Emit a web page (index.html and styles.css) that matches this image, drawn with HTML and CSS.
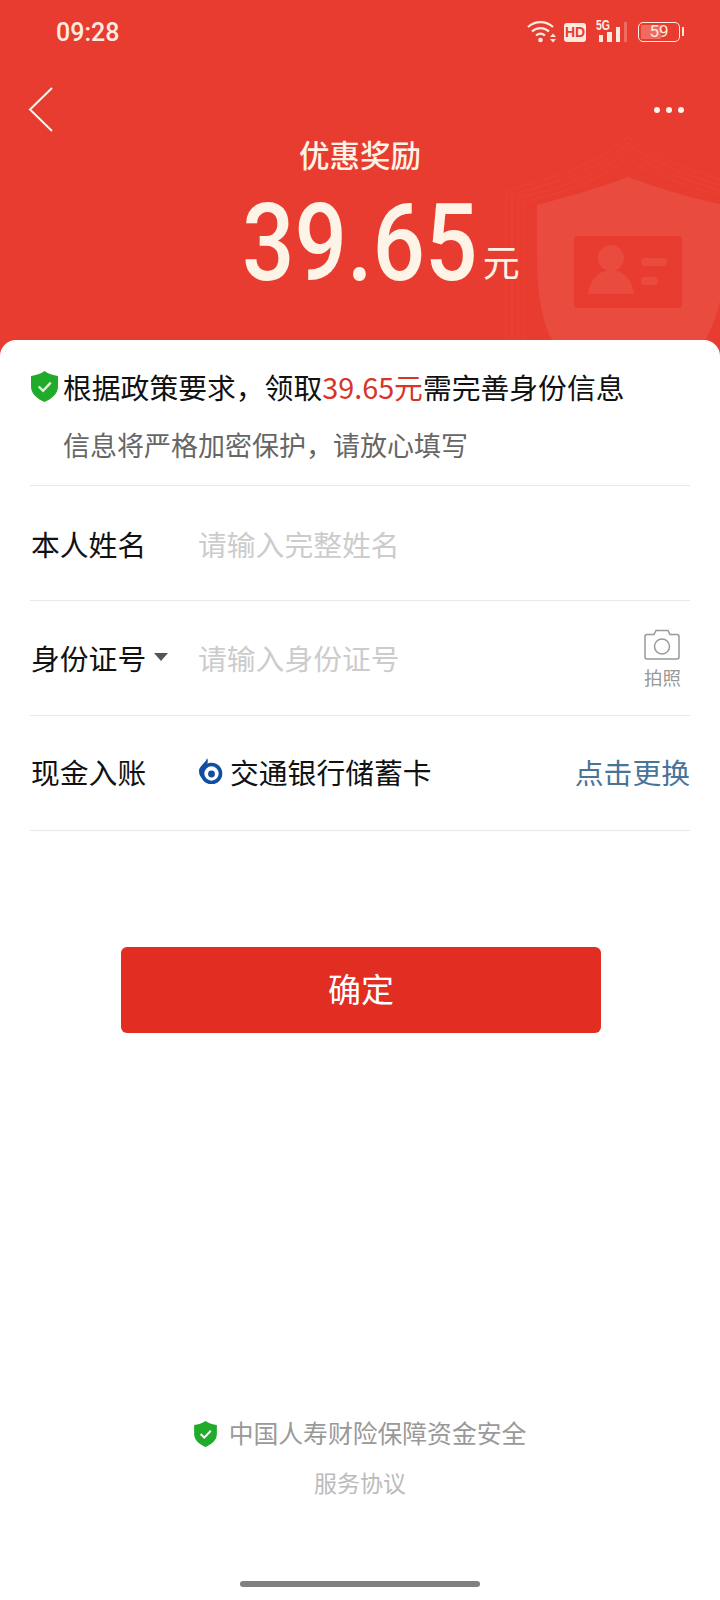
FILE: index.html
```html
<!DOCTYPE html>
<html lang="zh-CN">
<head>
  <meta charset="UTF-8" />
  <meta name="viewport" content="width=device-width, initial-scale=1.0"/>
  <title>优惠奖励</title>
  <link rel="stylesheet" href="styles.css">
</head>
<body>

  <header class="hero">
    <svg class="hero-shield" width="260" height="220" viewBox="0 0 260 220">
      <g fill="none" stroke="#ea4336" stroke-width="1">
        <path d="M6 210V60C60 48 100 30 128 7C156 30 210 48 260 60"/>
        <path d="M12 210V64C66 52 104 35 128 13C152 35 206 52 260 66"/>
        <path d="M18 210V68C72 56 108 40 128 19C148 40 204 56 260 72"/>
        <path d="M24 210V72C76 60 110 45 128 27C146 45 202 60 260 78"/>
      </g>
      <path d="M37 75C72 66 104 56 128 47C152 56 190 68 224 75V130C224 170 214 195 205 210H52C44 195 37 170 37 130Z" fill="#ea4b3f"/>
      <rect x="74" y="106" width="108" height="72" rx="4" fill="#e83c30"/>
      <circle cx="111" cy="128" r="13" fill="#ea4b3f"/>
      <path d="M88 164C90 148 100 140 111 140C122 140 132 148 134 164Z" fill="#ea4b3f"/>
      <rect x="141" y="128" width="26" height="8" rx="4" fill="#ea4b3f"/>
      <rect x="141" y="147" width="17" height="8" rx="4" fill="#ea4b3f"/>
    </svg>

    <div class="status-bar">
      <span class="status-time">09:28</span>
      <div class="status-icons">
        <svg width="30" height="24" viewBox="0 0 30 24">
          <g fill="none" stroke="#fdebe0" stroke-width="2.200">
            <path d="M1 7C8 0.500 19 0.500 26 7"/>
            <path d="M5 11.500C10 7 17 7 22 11.500"/>
            <path d="M9 15.500C12 13 15 13 18 15.500"/>
          </g>
          <circle cx="13.500" cy="20" r="2.300" fill="#fdebe0"/>
          <path d="M23 17L26 13.500L29 17ZM23 19L26 22.500L29 19Z" fill="#fdebe0"/>
        </svg>
        <span class="status-hd">HD</span>
        <div class="signal">
          <span class="signal-label">5G</span>
          <svg width="30" height="24" viewBox="0 0 30 24">
            <rect x="2" y="15" width="4" height="7" fill="#fdebe0"/>
            <rect x="10" y="12" width="5" height="10" fill="#fdebe0"/>
            <rect x="19" y="7" width="4" height="15" fill="#fdebe0"/>
            <rect x="27" y="2" width="3" height="20" fill="#ef6a5f"/>
          </svg>
        </div>
        <div class="battery">
          <span class="battery-level"></span>
          <span class="battery-num">59</span>
        </div>
      </div>
    </div>

    <div class="nav">
      <svg width="26" height="46" viewBox="0 0 26 46">
        <path d="M25 1L3 22.500L25 44" fill="none" stroke="#fdf3ea" stroke-width="2"/>
      </svg>
      <div class="more"><i></i><i></i><i></i></div>
    </div>

    <h1 class="hero-title">优惠奖励</h1>
    <div class="amount-row">
      <span class="amount">39.65</span>
      <span class="amount-unit">元</span>
    </div>
  </header>

  <main class="card">
    <div class="notice">
      <div class="notice-line">
        <svg class="shield" width="27" height="31" viewBox="0 0 28 32">
          <path d="M14 0C18 3 23 4.500 28 5V16C28 24 21 29 14 32C7 29 0 24 0 16V5C5 4.500 10 3 14 0Z" fill="#20ab2a"/>
          <path d="M8 16L12.500 20.500L20.500 12" fill="none" stroke="#dff3dc" stroke-width="2.500"/>
        </svg>
        <span>根据政策要求，领取<em>39.65元</em>需完善身份信息</span>
      </div>
      <p class="notice-sub">信息将严格加密保护，请放心填写</p>
    </div>

    <div class="form-row">
      <span class="form-label">本人姓名</span>
      <span class="placeholder">请输入完整姓名</span>
    </div>

    <div class="form-row form-row-id">
      <span class="form-label">身份证号<i class="caret"></i></span>
      <span class="placeholder">请输入身份证号</span>
      <div class="photo">
        <svg width="36" height="31" viewBox="0 0 36 31">
          <path d="M1 7.500C1 6.500 2 5.500 3 5.500H10L12 1.500H24L26 5.500H33C34 5.500 35 6.500 35 7.500V28C35 29 34 30 33 30H3C2 30 1 29 1 28Z" fill="none" stroke="#999" stroke-width="1.500"/>
          <circle cx="18" cy="17.500" r="7.500" fill="none" stroke="#999" stroke-width="1.500"/>
        </svg>
        <span>拍照</span>
      </div>
    </div>

    <div class="form-row form-row-bank">
      <span class="form-label">现金入账</span>
      <div class="bank">
        <svg width="24" height="26" viewBox="0 0 24 26">
          <path d="M8 0C10 4 8 7 5 10C3 12 3 16 4 21C1 19 0 16 0 13C0 8 7 5 8 0Z" fill="#0f4fa0"/>
          <circle cx="12.500" cy="15.500" r="9" fill="none" stroke="#0f4fa0" stroke-width="3.600"/>
          <circle cx="12.500" cy="16" r="3.400" fill="#0f4fa0"/>
        </svg>
        <span>交通银行储蓄卡</span>
      </div>
      <a class="change-link">点击更换</a>
    </div>

    <button class="confirm">确定</button>

    <footer class="card-foot">
      <div class="assure">
        <svg width="23" height="26" viewBox="0 0 28 32">
          <path d="M14 0C18 3 23 4.500 28 5V16C28 24 21 29 14 32C7 29 0 24 0 16V5C5 4.500 10 3 14 0Z" fill="#20ab2a"/>
          <path d="M8 16L12.500 20.500L20.500 12" fill="none" stroke="#fff" stroke-width="2.500"/>
        </svg>
        <span>中国人寿财险保障资金安全</span>
      </div>
      <a class="agreement">服务协议</a>
      <div class="home-bar"></div>
    </footer>
  </main>

</body>
</html>
```

FILE: styles.css
```css
* {
  box-sizing: border-box;
}

body {
  margin: 0;
  width: 720px;
  background: #e83c30;
  font-family: "Noto Sans CJK SC", "Noto Sans", sans-serif;
  color: #111;
}

.hero {
  position: relative;
  height: 340px;
  overflow: hidden;
  color: #fdf3e6;
}

.hero-shield {
  position: absolute;
  top: 130px;
  left: 500px;
}

.status-bar {
  position: relative;
  display: flex;
  justify-content: space-between;
  align-items: center;
  height: 64px;
  padding: 0 40px 0 56px;
}

.status-time {
  font-family: Roboto, sans-serif;
  font-size: 25px;
  font-weight: 500;
  color: #fdebe0;
}

.status-icons {
  display: flex;
  align-items: center;
  gap: 7px;
}

.status-hd {
  width: 22px;
  height: 19px;
  border-radius: 3px;
  background: #fdebe0;
  color: #e83c30;
  font: bold 14px/19px "Liberation Sans", sans-serif;
  text-align: center;
}

.signal {
  position: relative;
  margin-left: 4px;
}

.signal svg {
  display: block;
}

.signal-label {
  position: absolute;
  top: -3px;
  left: -1px;
  font: bold 15px/15px "Liberation Sans", sans-serif;
  color: #fdebe0;
  transform: scaleX(0.7);
  transform-origin: left top;
}

.battery {
  position: relative;
  width: 42px;
  height: 20px;
  margin-left: 4px;
  border: 1.5px solid #fdebe0;
  border-radius: 5px;
  text-align: center;
}

.battery::after {
  content: "";
  position: absolute;
  top: 4px;
  right: -5px;
  width: 2px;
  height: 9px;
  background: #fdebe0;
}

.battery-level {
  position: absolute;
  top: 2px;
  bottom: 2px;
  left: 2px;
  width: 20px;
  background: #ef6a5f;
}

.battery-num {
  position: relative;
  display: block;
  font: 17px/17px Roboto, sans-serif;
  color: #fdebe0;
}

.nav {
  position: relative;
  display: flex;
  justify-content: space-between;
  align-items: center;
  height: 46px;
  margin-top: 23px;
  padding: 0 36px 0 27px;
}

.nav svg {
  display: block;
}

.more {
  display: flex;
  gap: 6px;
}

.more i {
  width: 6px;
  height: 6px;
  border-radius: 50%;
  background: #fdf3ea;
}

.hero-title {
  position: relative;
  margin: 0;
  font-size: 30.500px;
  font-weight: 500;
  line-height: 42px;
  text-align: center;
}

.amount-row {
  position: relative;
  display: flex;
  justify-content: center;
  align-items: baseline;
  margin-top: 14px;
  padding-left: 41px;
}

.amount {
  display: inline-block;
  margin: 0 -19px;
  font-family: Roboto, sans-serif;
  font-size: 108px;
  font-weight: 500;
  line-height: 108px;
  transform: scaleX(0.855);
}

.amount-unit {
  margin-left: 4px;
  font-size: 37px;
  line-height: 36px;
  transform: translateY(-3px);
}

.card {
  display: flex;
  flex-direction: column;
  height: 1260px;
  padding: 0 30px;
  background: #fff;
  border-radius: 16px 16px 0 0;
}

.notice {
  height: 146px;
  padding-top: 26px;
  border-bottom: 1px solid #e8e8e8;
}

.notice-line {
  display: flex;
  align-items: center;
  gap: 5px;
  font-size: 28.800px;
  line-height: 42px;
}

.notice-line .shield {
  margin: 0 0 2px 1px;
}

.notice-line em {
  font-style: normal;
  color: #d8352a;
}

.notice-sub {
  margin: 16px 0 0 33px;
  font-size: 27px;
  line-height: 42px;
  color: #666;
}

.form-row {
  display: flex;
  align-items: center;
  height: 115px;
  border-bottom: 1px solid #e8e8e8;
  font-size: 28.800px;
}

.form-row-id {
  padding-bottom: 2px;
}

.form-row-bank {
  padding-bottom: 4px;
}

.form-label {
  display: flex;
  align-items: center;
  flex: none;
  width: 168px;
  padding-left: 1px;
}

.caret {
  width: 0;
  height: 0;
  margin-left: 8px;
  border-top: 8px solid #555;
  border-left: 7px solid transparent;
  border-right: 7px solid transparent;
}

.placeholder {
  flex: 1;
  color: #ccc;
}

.photo {
  display: flex;
  flex-direction: column;
  align-items: center;
  margin: 4px 9px 0 0;
  font-size: 18.500px;
  line-height: 26px;
  color: #999;
}

.photo svg {
  display: block;
  margin-bottom: 4px;
}

.bank {
  display: flex;
  flex: 1;
  align-items: center;
  gap: 7px;
  padding-left: 1px;
}

.change-link {
  color: #4a7398;
}

.confirm {
  align-self: center;
  width: 480px;
  height: 86px;
  margin: 116px 0 0 2px;
  padding-bottom: 5px;
  border: none;
  border-radius: 6px;
  background: #e12d22;
  color: #fff;
  font-family: inherit;
  font-size: 33px;
}

.card-foot {
  display: flex;
  flex: 1;
  flex-direction: column;
  align-items: center;
}

.assure {
  display: flex;
  align-items: center;
  gap: 12px;
  margin-top: 381px;
  font-size: 24.800px;
  line-height: 36px;
  color: #999;
}

.assure svg {
  margin-top: 4px;
}

.agreement {
  margin-top: 15px;
  font-size: 23px;
  line-height: 34px;
  color: #bbb;
}

.home-bar {
  width: 240px;
  height: 6px;
  margin-top: 82px;
  border-radius: 3px;
  background: #808080;
}
```
